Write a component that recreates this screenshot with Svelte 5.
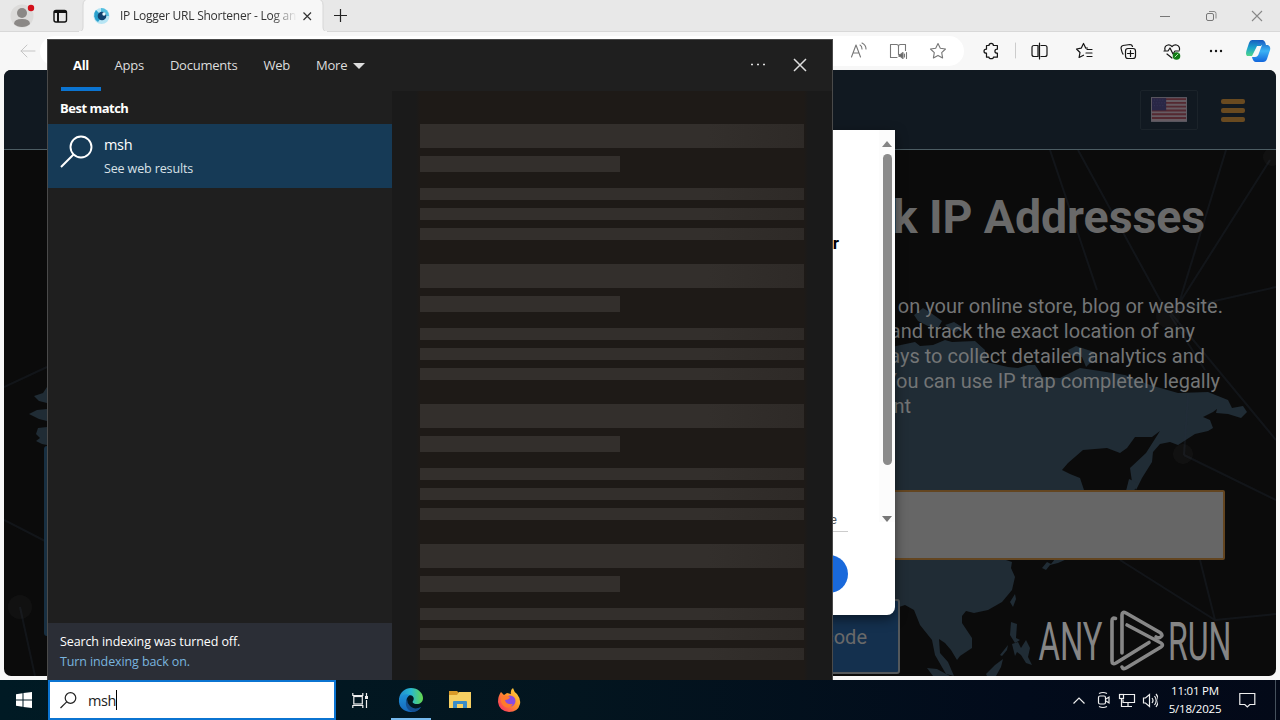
<script>
  const tabs = ['All', 'Apps', 'Documents', 'Web'];

  // each row ends at its own right edge
  const lines = [
    { text: 'on your online store, blog or website.', end: 1219 },
    { text: 'and track the exact location of any', end: 1191 },
    { text: 'ways to collect detailed analytics and', end: 1201 },
    { text: 'You can use IP trap completely legally', end: 1216 },
    { text: 'consent', end: 907 },
  ];

  let query = 'msh';
</script>

<div class="desktop">
  <div class="browser">
    <div class="tabbar">
      <svg class="chrome" width="1280" height="32" viewBox="0 0 1280 32" fill="none">
        <circle cx="22" cy="16" r="11.500" fill="#dcdbda" />
        <circle cx="22" cy="13" r="5" fill="#8b8886" />
        <path d="M14 24q0-5 8-5t8 5q-3 3-8 3t-8-3z" fill="#8b8886" />
        <circle cx="31" cy="8" r="3.200" fill="#d3101b" />
        <rect x="54" y="10.500" width="12.500" height="11.500" rx="2" stroke="#111" stroke-width="1.400" />
        <path d="M54 12h12.500M58 11v11" stroke="#111" stroke-width="2" />
        <path d="M78 32q5 0 5-5V5q0-6 6-6h228q6 0 6 6v22q0 5 5 5z" fill="#f7f7f7" stroke="#d6d6d6" />
        <path d="M79 32h248" stroke="#f7f7f7" stroke-width="2" />
        <circle cx="101.500" cy="16" r="8" fill="#b7e5f4" />
        <path d="M96 10a8 8 0 0 0 2 12l3-4-2-5z" fill="#2aa0cc" />
        <path d="M101 8a8 8 0 0 1 8 8h-4l-4-4z" fill="#55bfdf" />
        <circle cx="102" cy="16" r="4.300" fill="#10426f" />
        <circle cx="104" cy="14" r="1.700" fill="#e8faff" />
        <path d="M303.500 12.500l7.500 7.500M311 12.500L303.500 20" stroke="#333" stroke-width="1.200" />
        <path d="M334 15.500h13M340.500 9v13" stroke="#222" stroke-width="1.200" />
        <path d="M1160 16.500h10" stroke="#777" />
        <rect x="1206.500" y="13.500" width="7" height="7" rx="1.500" stroke="#777" />
        <path d="M1209 11.500h5q2 0 2 2v5" stroke="#888" />
        <path d="M1252 11l10 10M1262 11l-10 10" stroke="#888" stroke-width="1.100" />
      </svg>
      <span class="tab-title">IP Logger URL Shortener - Log an</span>
    </div>
    <div class="toolbar">
      <div class="address"></div>
      <svg class="chrome" width="1280" height="38" viewBox="0 32 1280 38" fill="none" stroke-linecap="round" stroke-linejoin="round">
        <path d="M35 51H21m6-6l-6 6 6 6" stroke="#c5c5c5" />
        <g stroke="#777" stroke-width="1.100">
          <path d="M851.500 57l4.500-12 4.500 12M853 53h6M860 45q2 1 2 4M862 43q4 2 4 6" />
          <path d="M897 57.500h-6.500V44.500h6q2 0 2 2v8M898.500 46.500q0-2 2-2h5v6" />
          <path d="M899 54.500h1.500l2.500-2v6l-2.500-2H899z" fill="#666" />
          <path d="M904.500 54v3M906.500 52.500v6" />
          <path d="M938 43.500l2.300 4.800 5.200.7-3.800 3.700.9 5.200-4.600-2.500-4.600 2.500.9-5.200-3.800-3.700 5.200-.7z" />
        </g>
        <g stroke="#151515" stroke-width="1.200">
          <path d="M986.500 45.500h2.500q0-2.200 2.200-2.200t2.200 2.200h4v3.700q-2.500 0-2.500 2t2.500 2v4h-4q0 1.500-2.200 1.500t-2.200-1.500h-2.500v-4q-2.500 0-2.500-2t2.500-2z" />
          <path d="M1038 45.500h-4q-2 0-2 2v7q0 2 2 2h4zM1041 45.500h4q2 0 2 2v7q0 2-2 2h-4M1039.500 43v16" />
          <path d="M1087.500 48l-1.700.2-2.300-4.700-2.300 4.700-4.700.8 3.500 3.500-.9 5 4.400-2.300M1087 49.500h5M1086 53h6M1087 56.500h5" />
          <rect x="1125.500" y="48.500" width="10" height="10" rx="2.500" />
          <path d="M1127.500 53.500h6M1130.500 50.500v6M1123 54q-1-1-2-6 0-2 2-2.500l7-1q2 0 2.500 2" />
          <path d="M1165 50q-1-4 3-5 2-.5 4 1.500 2-2 4.500-1.500 3.500 1 3 5M1164 51h4l2-3 3 6 2-3h4M1167 54l5 4" />
        </g>
        <circle cx="1176.500" cy="56" r="3.800" fill="#117c16" />
        <path d="M1175 57l3-3" stroke="#b5e5b5" />
        <path d="M1015.500 43v15" stroke="#ccc" />
        <g fill="#151515"><circle cx="1211" cy="51" r="1.200" /><circle cx="1216" cy="51" r="1.200" /><circle cx="1221" cy="51" r="1.200" /></g>
        <path d="M1252 40h9q3 0 2 3l-2 3h-4l-5 10h-5q-2-2 0-7l2-6q1-3 3-3z" fill="url(#cop1)" />
        <path d="M1259 40h3q3 0 4 5h2q4 2 1 8l-2 6q-1 3-4 3h-7q-3 0-4-5h3q3 0 4-4l3-8h-5z" fill="url(#cop2)" />
        <defs>
          <linearGradient id="cop1" x1="0" y1="0" x2="0" y2="1"><stop stop-color="#155fc0" /><stop offset=".5" stop-color="#1ba4cc" /><stop offset="1" stop-color="#50d688" /></linearGradient>
          <linearGradient id="cop2" x1="0" y1="0" x2="0" y2="1"><stop stop-color="#1657bd" /><stop offset=".5" stop-color="#3bb3f5" /><stop offset="1" stop-color="#1266dc" /></linearGradient>
        </defs>
      </svg>
    </div>

    <div class="page">
      <svg class="map" width="1272" height="606" viewBox="4 70 1272 606">
        <g fill="#202c35">
          <path d="M880 350L896 346 915 342 920 346 933 345 945 340 952 342 975 341 985 350 986 362 1008 367 1018 368 1028 365 1035 365 1040 372 1042 377 1060 378 1080 368 1100 371 1125 375 1150 385 1178 393 1208 392 1228 400 1232 408 1243 406 1247 412 1241 418 1228 414 1216 413 1217 409 1213 412 1203 417 1210 420 1213 428 1208 431 1195 434 1178 445 1170 442 1160 444 1153 452 1152 462 1142 478 1136 490 1132 482 1130 468 1146 453 1160 431 1152 437 1135 437 1127 448 1120 453 1107 448 1083 450 1068 463 1062 470 1070 474 1080 478 1084 490V520L1000 558 1012 562 1011 568 1015 577 1012 590 1002 602 988 610 974 613 966 611 962 616 962 623 972 638 972 648 960 656 957 660 951 650 945 643 939 639 940 653 948 662 954 676 946 674 935 655 932 640 920 625 914 610 905 605 896 608 880 600z" />
          <path d="M914 315l9-7 8 5 11 8-4 7-10-2-10-5zM945 325l9-3 8 5-7 6zM1068 350l8-4 18 6 0 7-8 8-4-10-12-2z" />
          <path d="M1010 602l5-8 1 5-3 8zM1011 622l6 2-1 14 4 2-5 3-5-8zM1012 644l6-2 3 6 5-8 4 8-2 9 4 8-6-2-5-8-4-3-2 4zM1042 568l5-6 4 2 4-5h12l-9 4-8 2-4 5zM1126 491l3-12 9 4-4 8zM927 668l10 1 13 7h-17zM986 674l9-9 8-6-2 8-5 9h-9zM1000 655l8-10-1 5-5 6z" />
          <path d="M47 387l-4 6-9 3 5 5 8 2zM47 409l-10 1-8 4 10 5 8 2zM47 427l-9 1-2 6 4 4-4 3 6 3 5 1z" />
        </g>
        <g stroke="#25303a" stroke-opacity=".3" stroke-width="2" fill="none">
          <path d="M1050 150L1097 290M1078 150L1160 300 1276 440M1226 150L1180 300M1270 160L1175 310 1276 287M1170 315L1205 370M1184 455L1276 500M1184 455L1188 395M1120 560L1215 620 1276 614M1215 620L1200 560M4 387L47 367M4 520L47 542M20 607L35 676" />
        </g>
        <g fill="#4b4f52" fill-opacity=".1"><circle cx="1272" cy="157" r="9" /><circle cx="1168" cy="316" r="12" /><circle cx="1183" cy="454" r="10" /><circle cx="20" cy="607" r="12" /></g>
      </svg>

      <header>
        <div class="lang">
          <svg width="36" height="25" viewBox="0 0 38 26">
            <rect x=".5" y=".5" width="37" height="25" fill="#665b62" stroke="#625f68" />
            <path d="M1 2h36M1 6h36M1 10h36M1 14h36M1 18h36M1 22h36" stroke="#542931" stroke-width="2" />
            <rect x="1" y="1" width="15" height="13" fill="#292746" />
            <path d="M3 3h12M2 6h13M3 9h12" stroke="#39375a" stroke-width="1" stroke-dasharray="1 2" />
          </svg>
        </div>
        <div class="burger"><i></i><i></i><i></i></div>
      </header>
      <h1>Track IP Addresses</h1>
      <div class="lead">
        {#each lines as line}
          <p style="width: {line.end}px">{line.text}</p>
        {/each}
      </div>
      <div class="url-input"></div>
      <div class="code-btn">code</div>
      <div class="left-box"></div>

      <svg class="watermark" width="196" height="64" viewBox="1037 609 196 64">
        <g font-family="Roboto, sans-serif" font-size="53" fill="#858585">
          <text x="1038.500" y="660" textLength="64" lengthAdjust="spacingAndGlyphs">ANY</text>
          <text x="1168" y="660" textLength="63.500" lengthAdjust="spacingAndGlyphs">RUN</text>
        </g>
        <g fill="none" stroke="#878787" stroke-width="3.600" stroke-linecap="round" stroke-linejoin="round">
          <path d="M1115.500 618.500q-3.500-1.500-3.500 2.500v40q0 4 4 2l33-20.500" />
          <path d="M1122 653v-38q0-4 4-2l34 19.500q4 3 0 5-2 1-4-.5" />
          <path d="M1127 625l34 18q3 2 0 4l-34 20.500q-4 2.500-5-.5" />
        </g>
      </svg>

      <div class="dialog">
        <b>r</b>
        <small>e</small>
        <div class="rule"></div>
        <div class="pill"></div>
        <div class="scroll">
          <svg width="10" height="6" viewBox="0 0 10 6"><path d="M0 6l5-6 5 6z" fill="#858585" /></svg>
          <div class="thumb"></div>
          <svg width="10" height="6" viewBox="0 0 10 6"><path d="M0 0l5 6 5-6z" fill="#777" /></svg>
        </div>
      </div>
    </div>
  </div>

  <div class="search">
    <nav>
      {#each tabs as tab, i}
        <span class:active={i === 0}>{tab}</span>
      {/each}
      <span class="more">More <svg width="12" height="6" viewBox="0 0 12 6"><path d="M0 0h12L6 6z" fill="#ddd" /></svg></span>
      <svg class="actions" width="60" height="20" viewBox="750 55 60 20">
        <path d="M751 64.500h2M757 64.500h2M763 64.500h2" stroke="#ddd" stroke-width="1.500" />
        <path d="M794 59l12 12M806 59l-12 12" stroke="#ddd" stroke-width="1.500" />
      </svg>
    </nav>
    <div class="body">
      <div class="results">
        <h2>Best match</h2>
        <div class="result">
          <svg width="34" height="34" viewBox="0 0 34 34" fill="none" stroke="#fff" stroke-width="1.900">
            <circle cx="21" cy="12" r="10.500" />
            <path d="M13.500 19.500L1 32" />
          </svg>
          <div>
            <div class="name">{query}</div>
            <div class="sub">See web results</div>
          </div>
        </div>
        <div class="notice">
          <div>Search indexing was turned off.</div>
          <a href="#index">Turn indexing back on.</a>
        </div>
      </div>
      <div class="preview">
        {#each Array(4) as _}
          <div class="skeleton"><i class="big"></i><i class="mid"></i><i></i><i></i><i></i></div>
        {/each}
      </div>
    </div>
  </div>

  <div class="taskbar">
    <div class="start">
      <svg width="16" height="16" viewBox="0 0 16 16" fill="#fff"><path d="M0 2.200L6.500 1.300v6.200H0zM7.500 1.100L16 0v7.500H7.500zM0 8.500h6.500v6.200L0 13.800zM7.500 8.500H16V16l-8.500-1.100z" /></svg>
    </div>
    <div class="field">
      <svg width="17" height="17" viewBox="0 0 17 17" fill="none" stroke="#222" stroke-width="1.200"><circle cx="10.500" cy="6" r="5.300" /><path d="M6.700 9.800L.5 16" /></svg>
      <span>{query}</span><i class="caret"></i>
    </div>
    <div class="apps">
      <div>
        <svg width="17" height="17" viewBox="0 0 17 17" fill="none" stroke="#eee" stroke-width="1.200"><path d="M.8 1v2.500h10V1M.8 16v-2.500h10V16M14.500 1v3M14.500 8v8" /><rect x="1.800" y="4.500" width="8.500" height="7.500" /><path d="M13 5.500h3" stroke-width="3" /></svg>
      </div>
      <div class="open">
        <svg width="26" height="26" viewBox="0 0 26 26">
          <defs>
            <linearGradient id="e1" x1="0" x2="1"><stop stop-color="#218bd2" /><stop offset=".5" stop-color="#28b8d1" /><stop offset="1" stop-color="#66d94b" /></linearGradient>
            <linearGradient id="e2" x1="0" y1="0" x2="0" y2="1"><stop stop-color="#1d91d8" /><stop offset="1" stop-color="#1769bd" /></linearGradient>
          </defs>
          <path d="M1 12C2 5 7 1 13 1c7 0 12 5 12 10 0 4-3 6-6 6-4 0-5-2-4-3 2-3 0-6-4-6-5 0-9 3-10 7z" fill="url(#e1)" />
          <path d="M1 12c2-4 7-6 11-4-4 2-5 8-1 12 3 3 8 3 12 0-3 4-7 5-10 5C6 25 0 20 1 12z" fill="url(#e2)" />
          <path d="M9 12c-3 5 0 12 6 13 4 0 7-3 8-5-4 2-8 2-11-1q-3-3-3-7z" fill="#144f91" />
        </svg>
      </div>
      <div>
        <svg width="22" height="20" viewBox="0 0 22 20"><path d="M0 1h8l2 2h11v5H0z" fill="#d99a28" /><path d="M0 5h8l2-3h12v16H0z" fill="#f6cf62" /><path d="M4 18v-6q0-1 1-1h12q1 0 1 1v6h-4v-4H8v4z" fill="#3a8cc8" /></svg>
      </div>
      <div>
        <svg width="24" height="25" viewBox="0 0 24 25">
          <defs><linearGradient id="f1" x1="1" y1="0" x2="0" y2="1"><stop stop-color="#ffe544" /><stop offset=".45" stop-color="#ff9329" /><stop offset="1" stop-color="#f7236c" /></linearGradient></defs>
          <path d="M4 4l3 3 3-2 4 1q-1-4 2-6 1 4 4 6 4 5 3 10-2 8-11 8Q2 23 1 14 1 8 4 4z" fill="url(#f1)" />
          <circle cx="13" cy="13" r="5.500" fill="#8a4be0" />
          <path d="M4 9q5-3 9 0-1 3-5 3 1 5 8 4-3 5-8 3-5-3-4-10z" fill="#ff7a2c" />
        </svg>
      </div>
    </div>
    <div class="tray">
      <svg width="85" height="20" viewBox="1073 690 85 20" fill="none" stroke="#eee" stroke-width="1.200">
        <path d="M1073.500 703.500l5.500-5.500 5.500 5.500" />
        <rect x="1098.500" y="696" width="7" height="8" rx="1.500" />
        <path d="M1106 699l3-2v6l-3-2M1099 693.500q4-2 8 0M1099 706.500q4 2 8 0" />
        <path d="M1124 694.500h10.500v8H1123v-3M1128 703v4M1124 706.500h8" /><rect x="1119.500" y="694.500" width="4" height="4" /><path d="M1121.500 699v7.500h3" />
        <path d="M1143.500 698h2l4-3.500v12l-4-3.500h-2zM1152 698q2 2.500 0 5M1154.500 696q3.500 4.500 0 9M1156 694q5 6 0 13" />
      </svg>
      <div class="clock"><div>11:01 PM</div><div>5/18/2025</div></div>
      <svg width="17" height="17" viewBox="0 0 17 17" fill="none" stroke="#eee" stroke-width="1.200"><path d="M.8 1.500h15v11h-5L8.300 15l-2.500-2.500h-5z" /></svg>
      <div class="peek"></div>
    </div>
  </div>
</div>

<style>
  :global(body) {
    overflow: hidden;
  }
  .desktop {
    position: relative;
    display: flex;
    flex-direction: column;
    width: 1280px;
    height: 720px;
    overflow: hidden;
    font-family: "Open Sans", "Noto Sans", sans-serif;
    font-size: 13px;
  }
  svg {
    display: block;
    flex: none;
  }
  .browser {
    height: 680px;
    background: #f7f7f7;
  }
  .tabbar {
    position: relative;
    height: 32px;
    background: #e8e8e8;
    box-shadow: inset 0 -1px #d8d8d8;
  }
  .chrome {
    position: absolute;
    left: 0;
    top: 0;
  }
  .tab-title {
    position: relative;
    display: block;
    margin-left: 120px;
    width: 180px;
    overflow: hidden;
    white-space: nowrap;
    font-size: 12px;
    letter-spacing: -0.24px;
    line-height: 32px;
    color: #333;
    mask-image: linear-gradient(to right, #000 152px, transparent 177px);
  }
  .toolbar {
    position: relative;
    height: 38px;
    padding-top: 4px;
    box-sizing: border-box;
  }
  .address {
    width: 924px;
    height: 30px;
    margin-left: 40px;
    border-radius: 15px;
    background: #fff;
  }
  .page {
    position: relative;
    height: 606px;
    margin: 0 4px;
    border-radius: 7px;
    overflow: hidden;
    background: #0b0b0b;
    font-family: Roboto, sans-serif;
    color: #696969;
  }
  .map {
    position: absolute;
    inset: 0;
  }
  header {
    position: relative;
    display: flex;
    align-items: center;
    justify-content: flex-end;
    gap: 23px;
    height: 79px;
    padding-right: 31px;
    border-bottom: 1px solid #4c5c63;
    background: #111921;
  }
  .lang {
    display: flex;
    align-items: center;
    justify-content: center;
    width: 56px;
    height: 38px;
    border: 1px solid #1b232a;
    border-radius: 2px;
  }
  .burger {
    display: flex;
    flex-direction: column;
    gap: 4px;
    width: 24px;
    padding-top: 1px;
  }
  .burger i {
    height: 5px;
    border-radius: 2px;
    background: #694a20;
  }
  h1 {
    position: relative;
    width: 1201px;
    margin: 37px 0 0;
    text-align: right;
    font-size: 46.500px;
    line-height: 60px;
    letter-spacing: -0.1px;
    font-weight: 700;
  }
  .lead {
    position: relative;
    margin-top: 47px;
    font-size: 20px;
    line-height: 25px;
    font-weight: 400;
    color: #737576;
  }
  .lead p {
    margin: 0;
    text-align: right;
    white-space: nowrap;
  }
  .url-input {
    position: relative;
    box-sizing: border-box;
    width: 1181px;
    height: 70px;
    margin: 71px 0 0 40px;
    border: 2px solid #634520;
    border-radius: 2px;
    background: #666;
  }
  .code-btn {
    position: relative;
    box-sizing: border-box;
    width: 200px;
    height: 75px;
    margin: 39px 0 0 696px;
    padding-right: 31px;
    border: 2px solid #54585b;
    border-radius: 3px;
    background: #14304e;
    text-align: right;
    font-size: 20px;
    line-height: 72px;
  }
  .left-box {
    position: absolute;
    left: 40px;
    top: 376px;
    width: 10px;
    height: 190px;
    border-radius: 3px;
    background: #182f41;
  }
  .watermark {
    position: absolute;
    right: 43px;
    top: 539px;
  }
  .dialog {
    position: absolute;
    left: 500px;
    top: 60px;
    width: 391px;
    height: 485px;
    border-radius: 3px 3px 8px 8px;
    background: #fff;
    box-shadow: 0 4px 12px rgba(0, 0, 0, 0.5);
    color: #000;
  }
  .dialog b,
  .dialog small {
    position: absolute;
    right: 56px;
    top: 103px;
    font-size: 17px;
  }
  .dialog small {
    right: 58px;
    top: 382px;
    font-size: 13px;
    color: #555;
  }
  .rule {
    position: absolute;
    right: 47px;
    top: 401px;
    width: 60px;
    border-top: 1px solid #ccc;
  }
  .pill {
    position: absolute;
    right: 47px;
    top: 425px;
    width: 120px;
    height: 38px;
    border-radius: 19px;
    background: #1969db;
  }
  .scroll {
    position: absolute;
    right: 0;
    top: 0;
    display: flex;
    flex-direction: column;
    align-items: center;
    width: 16px;
    height: 392px;
    padding-top: 11px;
    box-sizing: border-box;
    background: #fcfcfc;
  }
  .thumb {
    width: 9px;
    height: 311px;
    margin: 7px 0 51px;
    border-radius: 5px;
    background: #8b8b8b;
  }

  .search {
    position: absolute;
    left: 47px;
    top: 39px;
    width: 784px;
    height: 640px;
    border: 1px solid #4a4a4a;
    border-bottom: none;
    background: #1f1f1f;
    color: #fff;
  }
  nav {
    display: flex;
    height: 51px;
    padding-left: 13px;
    line-height: 51px;
    color: #ddd;
  }
  nav span {
    margin-right: 26px;
    letter-spacing: -0.23px;
  }
  nav .active {
    width: 40px;
    margin-right: 13.5px;
    box-sizing: border-box;
    border-bottom: 4px solid #0b74d1;
    text-align: center;
    font-weight: 700;
    color: #fff;
  }
  .more {
    display: flex;
    align-items: center;
    gap: 6px;
  }
  .actions {
    margin: 15px 22px 0 auto;
  }
  .body {
    display: flex;
    height: 589px;
  }
  .results {
    display: flex;
    flex-direction: column;
    width: 344px;
  }
  h2 {
    margin: 0;
    padding-left: 12px;
    font-size: 13px;
    letter-spacing: -0.5px;
    line-height: 35px;
    font-weight: 700;
    height: 33px;
  }
  .result {
    display: flex;
    gap: 10px;
    height: 64px;
    padding: 11px 12px;
    box-sizing: border-box;
    background: #163a56;
  }
  .name {
    font-size: 14.500px;
    letter-spacing: -0.3px;
    line-height: 20px;
  }
  .sub {
    margin-top: 4px;
    font-size: 12.500px;
    letter-spacing: -0.13px;
    line-height: 19px;
    color: #d9e1e7;
  }
  .notice {
    height: 57px;
    margin-top: auto;
    padding: 9px 12px 0;
    box-sizing: border-box;
    background: #2b2e36;
    font-size: 12.500px;
    letter-spacing: -0.11px;
    line-height: 20px;
  }
  .notice a {
    color: #79b4df;
    text-decoration: none;
  }
  .preview {
    width: 440px;
    padding: 33px 28px 0;
    box-sizing: border-box;
    background: linear-gradient(to right, #1a1a1a 24px, #1e1a17 28px, #1e1a17 412px, #1a1a1a 416px);
    overflow: hidden;
  }
  .skeleton {
    display: flex;
    flex-direction: column;
    height: 140px;
    gap: 8px;
  }
  .skeleton i {
    height: 12px;
    background: linear-gradient(to right, #332f2c 75%, #2e2a27);
  }
  .skeleton .big {
    height: 24px;
  }
  .skeleton .mid {
    width: 200px;
    height: 16px;
    margin-bottom: 8px;
    background: #332f2c;
  }

  .taskbar {
    display: flex;
    height: 40px;
    background: linear-gradient(to right, #001a24, #03151f 45%, #020b1b 80%, #030918);
    color: #fff;
  }
  .start {
    display: flex;
    align-items: center;
    justify-content: center;
    width: 48px;
  }
  .field {
    display: flex;
    align-items: center;
    width: 288px;
    padding-left: 10px;
    box-sizing: border-box;
    border: 2px solid #0b74d1;
    background: #fff;
    color: #222;
    font-size: 14.500px;
  }
  .field span {
    margin-left: 11px;
    letter-spacing: -0.4px;
  }
  .caret {
    width: 1px;
    height: 20px;
    background: #000;
  }
  .apps {
    display: flex;
  }
  .apps div {
    display: flex;
    align-items: center;
    justify-content: center;
    width: 49px;
  }
  .apps .open {
    background: linear-gradient(#76b9ed, #76b9ed) center bottom / 40px 2px no-repeat;
    width: 52px;
  }
  .apps div:nth-child(3) {
    width: 46px;
  }
  .apps div:nth-child(4) {
    width: 51px;
  }
  .tray {
    display: flex;
    align-items: center;
    margin-left: auto;
  }
  .clock {
    width: 74px;
    text-align: center;
    font-size: 11.500px;
    line-height: 18px;
    letter-spacing: -0.2px;
    margin-right: 7px;
  }
  .peek {
    width: 4px;
    height: 40px;
    margin-left: 19px;
    border-left: 1px solid #45505c;
  }
</style>
